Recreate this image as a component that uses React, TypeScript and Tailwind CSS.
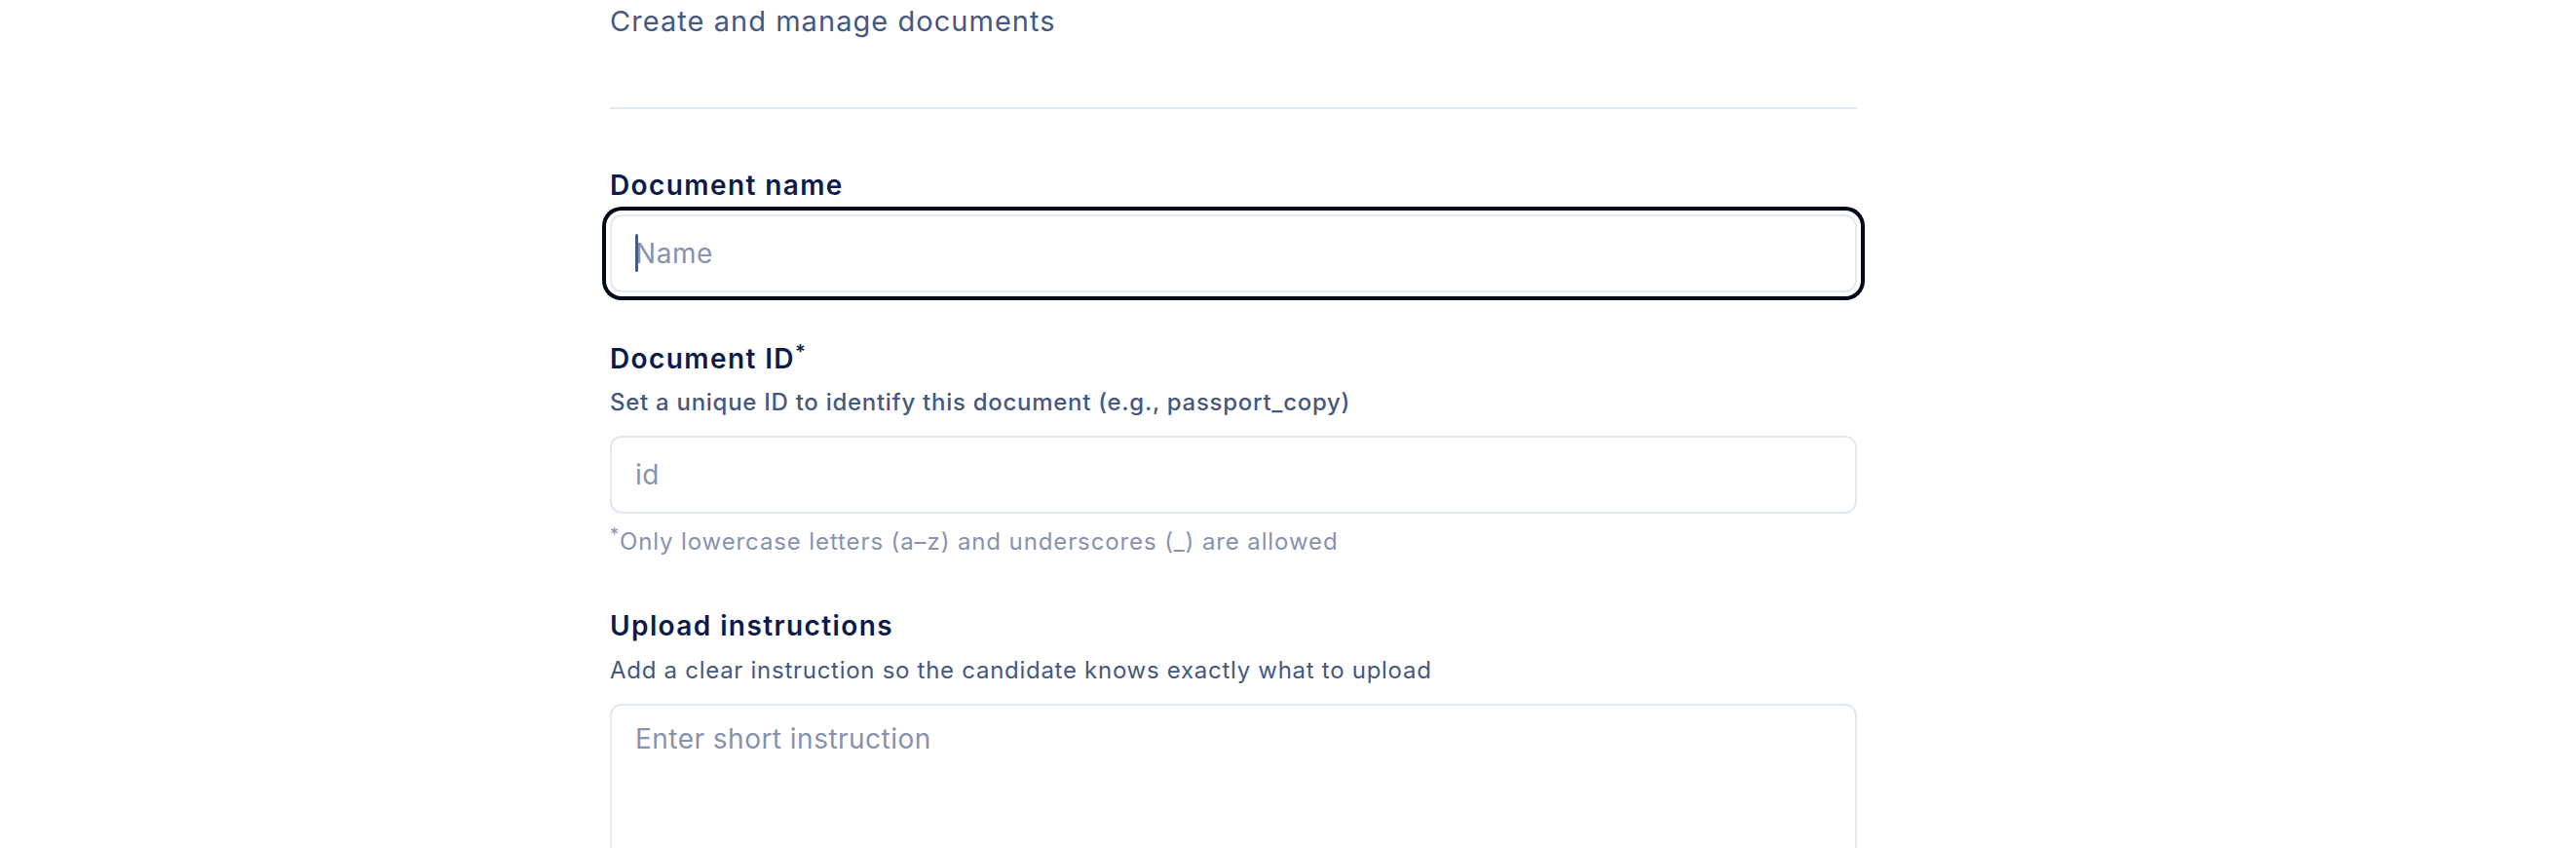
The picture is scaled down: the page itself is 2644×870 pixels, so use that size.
import React from "react"

const font = "font-['Inter','Liberation_Sans',sans-serif]"

function Label({ children, className = "" }: { children: React.ReactNode; className?: string }) {
  return (
    <label className={`block text-[28px] leading-[40px] font-semibold tracking-[0.05em] text-[#0d1b4b] ${className}`}>
      {children}
    </label>
  )
}

function Helper({ children, className = "" }: { children: React.ReactNode; className?: string }) {
  return <p className={`text-[24px] leading-[32px] text-[#46587e] ${className}`}>{children}</p>
}

const inputBase =
  "h-[80px] w-full rounded-[12px] border-2 border-[#e2e8f0] bg-white px-[24px] text-[28px] tracking-[0.02em] text-[#0d1b4b] placeholder:text-[#8792ae] outline-none"

export default function App() {
  return (
    <div className={`min-h-screen bg-white ${font}`}>
      <div className="ml-[626px] w-[1280px] pt-[2px]">
        <p className="text-[29px] leading-[40px] tracking-[0.036em] text-[#46587e]">Create and manage documents</p>
        <div className="mt-[68px] h-[2px] bg-[#e2e8f0]" />

        <Label className="mt-[58px]">Document name</Label>
        <div className="relative mt-[10px]">
          <input
            placeholder="Name"
            className={`${inputBase} ring-4 ring-[#020817] ring-offset-4 ring-offset-white`}
          />
          <span className="absolute left-[26px] top-[20px] h-[39px] w-[3px] rounded-full bg-[#475a7f]" />
        </div>

        <Label className="mt-[48px]">
          Document ID<sup className="text-[20px]">*</sup>
        </Label>
        <Helper className="mt-[9px] font-medium tracking-[0.03em]">
          Set a unique ID to identify this document (e.g., passport_copy)
        </Helper>
        <input placeholder="id" className={`${inputBase} mt-[18px]`} />
        <p className="mt-[13px] text-[24px] leading-[32px] tracking-[0.037em] text-[#8792ae]">
          <sup>*</sup>Only lowercase letters (a–z) and underscores (_) are allowed
        </p>

        <Label className="mt-[50px]">Upload instructions</Label>
        <Helper className="mt-[10px] tracking-[0.03em]">
          Add a clear instruction so the candidate knows exactly what to upload
        </Helper>
        <textarea
          placeholder="Enter short instruction"
          className="mt-[18px] block h-[220px] w-full resize-none rounded-[12px] border-2 border-[#e2e8f0] bg-white px-[24px] py-[16px] text-[28px] leading-[36px] tracking-[0.017em] text-[#0d1b4b] placeholder:text-[#8792ae] outline-none"
        />
      </div>
    </div>
  )
}
